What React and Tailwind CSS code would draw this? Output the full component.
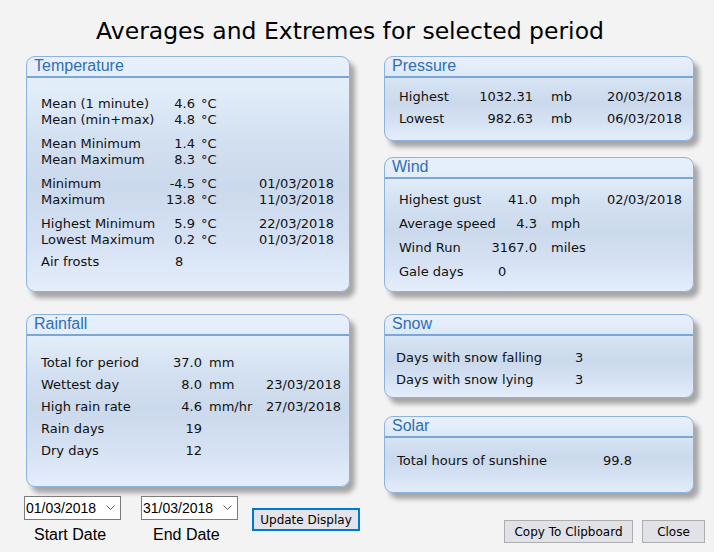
import React from "react";

const verdana = { fontFamily: '"DejaVu Sans", Verdana, sans-serif' };
const arial = { fontFamily: '"Liberation Sans", Arial, sans-serif' };

function Panel({ title, className, bodyClass, children }) {
  return (
    <div
      className={`flex flex-col rounded-[9px] border border-[#8cb2de] bg-[linear-gradient(to_bottom,#e8effb_0%,#e2edf9_14%,#d2e0f1_35%,#cbd9ec_55%,#d6e2f4_80%,#e5edfb_100%)] shadow-[5px_6px_5px_rgba(0,0,0,0.32)] ${className}`}
    >
      <div className="h-[19px] pl-[7px] text-[16px] leading-[18px] text-[#2f6fb5]" style={arial}>
        {title}
      </div>
      <div className="h-[2px] bg-[#7aa7d8]" />
      <div className={`text-[13px] text-[#111] ${bodyClass}`} style={verdana}>
        {children}
      </div>
    </div>
  );
}

function Row({ cols, label, value, unit, date, valueClass = "text-right" }) {
  return (
    <div className={`grid ${cols}`}>
      <span className="whitespace-nowrap">{label}</span>
      <span className={`whitespace-nowrap ${valueClass}`}>{value}</span>
      <span className="whitespace-nowrap">{unit}</span>
      <span className="whitespace-nowrap">{date}</span>
    </div>
  );
}

function DatePicker({ value, label, labelClass }) {
  return (
    <div className="flex flex-col">
      <div
        className="flex h-[24px] w-[97px] items-center justify-between border border-[#7a7a7a] bg-white pl-[1px] pr-[5px] text-[14px] text-black"
        style={arial}
      >
        <span>{value}</span>
        <svg width="9" height="6" viewBox="0 0 9 6">
          <polyline points="0.5,0.5 4.5,4.5 8.5,0.5" fill="none" stroke="#606060" strokeWidth="1" />
        </svg>
      </div>
      <div className={`mt-[5px] text-[16px] leading-[20px] text-black ${labelClass}`} style={arial}>
        {label}
      </div>
    </div>
  );
}

export default function App() {
  const tCols = "grid-cols-[114px_40px_64px_auto] pl-[6px] leading-[16px]";
  const rCols = "grid-cols-[121px_40px_64px_auto] leading-[22px]";
  const pCols = "grid-cols-[80px_54px_74px_auto] leading-[22px]";
  const wCols = "grid-cols-[84px_54px_70px_auto] leading-[24px]";
  const degC = <span className="pl-[6px]">°C</span>;

  return (
    <div className="h-[552px] w-[714px] overflow-hidden bg-[#f3f3f3]">
      <div
        className="flex h-[56px] w-[700px] items-center justify-center pt-[8px] text-[23.5px] text-black"
        style={verdana}
      >
        Averages and Extremes for selected period
      </div>

      <div className="flex pl-[26px]">
        {/* left column */}
        <div className="flex w-[324px] flex-col">
          <Panel title="Temperature" className="h-[236px]" bodyClass="pl-[8px] pt-[18px]">
            <Row cols={tCols} label="Mean (1 minute)" value="4.6" unit={degC} />
            <Row cols={tCols} label="Mean (min+max)" value="4.8" unit={degC} />
            <div className="h-[8px]" />
            <Row cols={tCols} label="Mean Minimum" value="1.4" unit={degC} />
            <Row cols={tCols} label="Mean Maximum" value="8.3" unit={degC} />
            <div className="h-[8px]" />
            <Row cols={tCols} label="Minimum" value="-4.5" unit={degC} date="01/03/2018" />
            <Row cols={tCols} label="Maximum" value="13.8" unit={degC} date="11/03/2018" />
            <div className="h-[8px]" />
            <Row cols={tCols} label="Highest Minimum" value="5.9" unit={degC} date="22/03/2018" />
            <Row cols={tCols} label="Lowest Maximum" value="0.2" unit={degC} date="01/03/2018" />
            <div className="h-[6px]" />
            <Row cols={tCols} label="Air frosts" value="8" valueClass="pl-[20px]" />
          </Panel>

          <Panel title="Rainfall" className="mt-[22px] h-[173px]" bodyClass="pl-[14px] pt-[16px]">
            <Row cols={rCols} label="Total for period" value="37.0" unit={<span className="pl-[7px]">mm</span>} />
            <Row cols={rCols} label="Wettest day" value="8.0" unit={<span className="pl-[7px]">mm</span>} date="23/03/2018" />
            <Row cols={rCols} label="High rain rate" value="4.6" unit={<span className="pl-[7px]">mm/hr</span>} date="27/03/2018" />
            <Row cols={rCols} label="Rain days" value="19" />
            <Row cols={rCols} label="Dry days" value="12" />
          </Panel>

          <div className="-ml-[2px] mt-[9px] flex items-start">
            <DatePicker value="01/03/2018" label="Start Date" labelClass="pl-[10px]" />
            <div className="ml-[20px]">
              <DatePicker value="31/03/2018" label="End Date" labelClass="pl-[12px]" />
            </div>
            <button
              className="ml-[14px] mt-[12px] h-[23px] w-[108px] shrink-0 border-2 border-[#0078d7] bg-[#e3e3ea] text-[12px] text-black"
              style={verdana}
            >
              Update Display
            </button>
          </div>
        </div>

        {/* right column */}
        <div className="ml-[34px] flex w-[321px] flex-col">
          <Panel title="Pressure" className="h-[85px] w-[310px]" bodyClass="pl-[14px] pt-[8px]">
            <Row cols={pCols} label="Highest" value="1032.31" unit={<span className="pl-[18px]">mb</span>} date="20/03/2018" />
            <Row cols={pCols} label="Lowest" value="982.63" unit={<span className="pl-[18px]">mb</span>} date="06/03/2018" />
          </Panel>

          <Panel title="Wind" className="mt-[16px] h-[135px] w-[310px]" bodyClass="pl-[14px] pt-[9px]">
            <Row cols={wCols} label="Highest gust" value="41.0" unit={<span className="pl-[14px]">mph</span>} date="02/03/2018" />
            <Row cols={wCols} label="Average speed" value="4.3" unit={<span className="pl-[14px]">mph</span>} />
            <Row cols={wCols} label="Wind Run" value="3167.0" unit={<span className="pl-[14px]">miles</span>} />
            <Row cols={wCols} label="Gale days" value="0" valueClass="pl-[15px]" />
          </Panel>

          <Panel title="Snow" className="mt-[22px] h-[84px] w-[310px]" bodyClass="pl-[11px] pt-[11px] leading-[22px]">
            <div className="grid grid-cols-[179px_auto]">
              <span>Days with snow falling</span>
              <span>3</span>
              <span>Days with snow lying</span>
              <span>3</span>
            </div>
          </Panel>

          <Panel title="Solar" className="mt-[18px] h-[77px] w-[310px]" bodyClass="pl-[12px] pt-[12px] leading-[22px]">
            <div className="grid grid-cols-[206px_auto]">
              <span>Total hours of sunshine</span>
              <span>99.8</span>
            </div>
          </Panel>

          <div className="mt-[27px] flex justify-end gap-[9px]" style={verdana}>
            <button className="h-[23px] w-[129px] border border-[#adadad] bg-[#e1e1e8] text-[12px] text-black">
              Copy To Clipboard
            </button>
            <button className="h-[23px] w-[63px] border border-[#adadad] bg-[#e1e1e8] text-[12px] text-black">
              Close
            </button>
          </div>
        </div>
      </div>
    </div>
  );
}
